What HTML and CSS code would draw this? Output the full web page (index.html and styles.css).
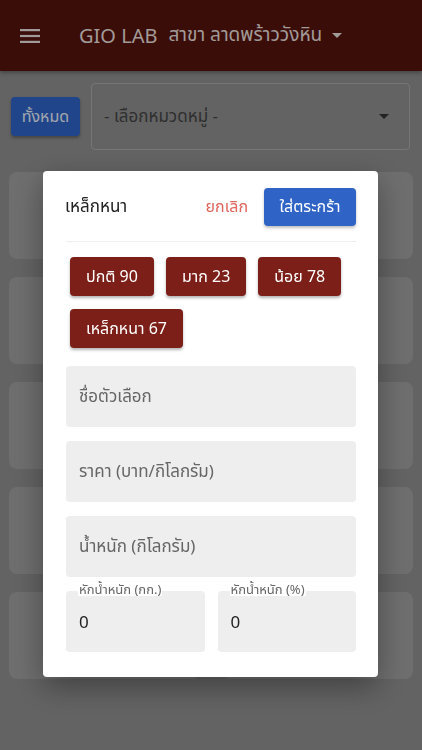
FILE: index.html
```html
<html>

<head>
    <title>GIO LAB</title>
    <link rel="stylesheet" href="styles.css">
</head>

<body>
    <div class="appbar">
        <svg class="menu" width="20" height="14" viewBox="0 0 20 14">
            <rect x="0" y="0" width="20" height="2.2" />
            <rect x="0" y="5.9" width="20" height="2.2" />
            <rect x="0" y="11.8" width="20" height="2.2" />
        </svg>
        <span class="brand">GIO LAB</span>
        <span class="branch">สาขา ลาดพร้าววังหิน</span>
        <span class="caret light"></span>
    </div>

    <div class="toolbar">
        <button class="all">ทั้งหมด</button>
        <div class="select">
            <span>- เลือกหมวดหมู่ -</span>
            <span class="caret"></span>
        </div>
    </div>

    <div class="grid">
        <div class="card"></div>
        <div class="card"></div>
        <div class="card"></div>
        <div class="card"></div>
        <div class="card"></div>
        <div class="card"></div>
        <div class="card"></div>
        <div class="card"></div>
        <div class="card"></div>
        <div class="card"></div>
    </div>

    <div class="overlay"></div>

    <div class="dialog">
        <div class="dialogHead">
            <span class="title">เหล็กหนา</span>
            <span class="cancel">ยกเลิก</span>
            <button class="cart">ใส่ตระกร้า</button>
        </div>
        <div class="chips">
            <button class="chip">ปกติ 90</button>
            <button class="chip">มาก 23</button>
            <button class="chip">น้อย 78</button>
            <button class="chip">เหล็กหนา 67</button>
        </div>
        <div class="field">ชื่อตัวเลือก</div>
        <div class="field">ราคา (บาท/กิโลกรัม)</div>
        <div class="field">น้ำหนัก (กิโลกรัม)</div>
        <div class="pair">
            <div class="field value">
                <label>หักน้ำหนัก (กก.)</label>
                0
            </div>
            <div class="field value">
                <label>หักน้ำหนัก (%)</label>
                0
            </div>
        </div>
    </div>
</body>

</html>
```

FILE: styles.css
```css
:root {
    --header: #55130d;
    --page: #8e8e8e;
    --card: #9e9e9e;
    --blue: #2f64c6;
    --chip: #7c1f18;
    --field: #eeeeee;
}

body {
    margin: 0;
    background-color: var(--page);
    font-family: "Noto Sans", "Noto Sans Thai", sans-serif;
    overflow: hidden;
    height: 750px;
}

button {
    font-family: inherit;
    border: none;
    cursor: pointer;
}

.appbar {
    height: 71px;
    background-color: var(--header);
    display: flex;
    align-items: center;
    padding-left: 20px;
    color: #e6ddda;
    box-shadow: 0 2px 4px rgba(0, 0, 0, 0.3);
}

.menu {
    fill: #e6ddda;
    margin-right: 39px;
}

.brand {
    font-size: 20px;
    margin-right: 11px;
}

.branch {
    font-size: 19px;
    margin-right: 10px;
}

.caret {
    width: 0;
    height: 0;
    border-left: 5px solid transparent;
    border-right: 5px solid transparent;
    border-top: 5px solid #333;
}

.caret.light {
    border-top-color: #e6ddda;
}

.toolbar {
    display: flex;
    align-items: center;
    gap: 11px;
    padding: 12px 12px 0 11px;
}

.all {
    background-color: var(--blue);
    color: #e8eef9;
    font-size: 16px;
    height: 39px;
    width: 69px;
    border-radius: 4px;
    padding: 0;
    box-shadow: 0 2px 3px rgba(0, 0, 0, 0.3);
}

.select {
    flex: 1;
    height: 65px;
    border: 1px solid #aaaaaa;
    border-radius: 4px;
    display: flex;
    align-items: center;
    justify-content: space-between;
    padding: 0 20px 0 12px;
    font-size: 17px;
    color: #444;
}

.grid {
    display: grid;
    grid-template-columns: 1fr 1fr;
    column-gap: 22px;
    row-gap: 18px;
    padding: 22px 9px 0 9px;
}

.card {
    height: 87px;
    background-color: var(--card);
    border-radius: 8px;
}

.overlay {
    position: fixed;
    inset: 0;
    background-color: rgba(0, 0, 0, 0.3);
}

.dialog {
    position: fixed;
    left: 43px;
    top: 171px;
    width: 335px;
    box-sizing: border-box;
    padding: 17px 22px 25px 23px;
    background-color: white;
    border-radius: 4px;
    box-shadow: 0 10px 30px rgba(0, 0, 0, 0.35);
}

.dialogHead {
    display: flex;
    align-items: center;
    padding-bottom: 15px;
    border-bottom: 1px solid #eeeeee;
}

.title {
    flex: 1;
    font-size: 17px;
    color: #222;
    margin-left: -1px;
}

.cancel {
    color: #e0655c;
    font-size: 16px;
    margin-right: 16px;
}

.cart {
    background-color: var(--blue);
    color: white;
    font-size: 16px;
    width: 92px;
    height: 38px;
    border-radius: 4px;
    box-shadow: 0 2px 3px rgba(0, 0, 0, 0.25);
}

.chips {
    display: flex;
    flex-wrap: wrap;
    gap: 13px 12px;
    padding: 15px 0 18px 4px;
}

.chip {
    background-color: var(--chip);
    color: white;
    font-size: 16px;
    height: 39px;
    padding: 0 16px;
    border-radius: 4px;
    box-shadow: 0 2px 3px rgba(0, 0, 0, 0.3);
}

.field {
    position: relative;
    height: 61px;
    background-color: var(--field);
    border-radius: 4px;
    display: flex;
    align-items: center;
    padding: 0 13px;
    font-size: 17px;
    color: #666;
    margin-bottom: 14px;
}

.pair {
    display: flex;
    gap: 13px;
}

.pair .field {
    flex: 1;
    margin-bottom: 0;
}

.field.value {
    color: #222;
}

.field label {
    position: absolute;
    left: 12px;
    top: -9px;
    font-size: 13px;
    line-height: 14px;
    color: #666;
    background-color: white;
    padding: 0 1px;
}
```
